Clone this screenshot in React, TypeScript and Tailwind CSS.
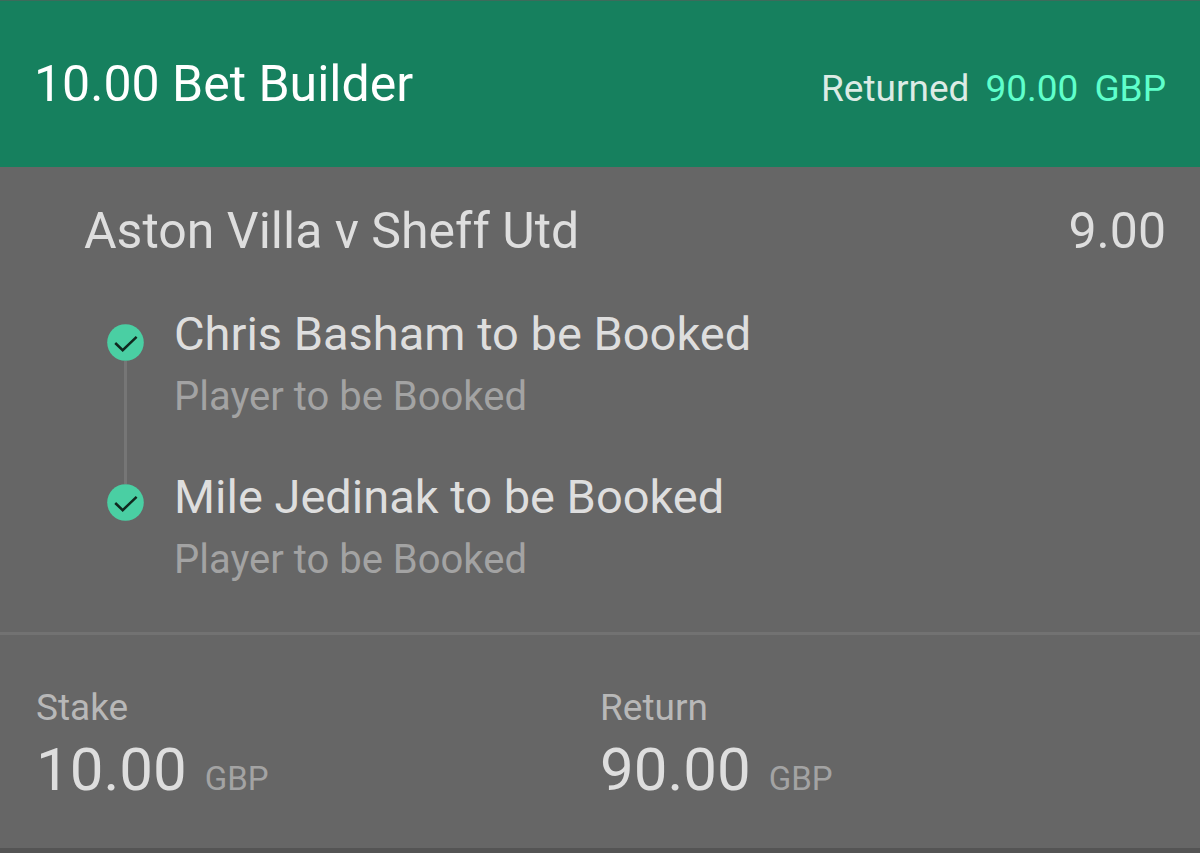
const legs = [
  { selection: 'Chris Basham to be Booked', market: 'Player to be Booked' },
  { selection: 'Mile Jedinak to be Booked', market: 'Player to be Booked' },
];

const totals = [
  { label: 'Stake', amount: '10.00' },
  { label: 'Return', amount: '90.00' },
];

function WonIcon() {
  return (
    <svg viewBox="0 0 37 37" className="block size-[37px] shrink-0">
      <circle cx="18.5" cy="18.5" r="18.3" fill="#4acfa3" />
      <path d="M8.2 19 15.7 26.2 29.6 12.8" fill="none" stroke="#10291f" strokeWidth="2.5" />
    </svg>
  );
}

function ResultRail() {
  return (
    <div className="flex flex-col items-center pt-[17px]" aria-hidden="true">
      {legs.map((leg, i) => (
        <div key={leg.selection} className="flex flex-col items-center">
          {i > 0 && <div className="h-[123px] w-[3px] bg-[#767676]" />}
          <WonIcon />
        </div>
      ))}
    </div>
  );
}

export default function App() {
  return (
    <main className="min-h-screen border-b-[5px] border-[#545454] bg-[#666] font-['Roboto',sans-serif] text-[#dedede]">
      <header className="flex items-baseline justify-between border-t border-[#3d6b5b] bg-[#16805e] px-[34px] py-14 text-white">
        <h1 className="text-[50px] leading-[54px]">10.00 Bet Builder</h1>
        <p className="flex gap-4 text-[37px] leading-[44px] text-[#dcebe5]">
          <span>Returned</span>
          <span className="flex gap-4 text-[#5fffcb]">
            <span>90.00</span>
            <span>GBP</span>
          </span>
        </p>
      </header>

      <section className="pt-9 pr-[34px] pb-[46px] pl-[84px]">
        <div className="flex items-center justify-between text-[50px] leading-[56px]">
          <h2>Aston Villa v Sheff Utd</h2>
          <span>9.00</span>
        </div>
        <div className="mt-12 flex gap-[30px] pl-[23px]">
          <ResultRail />
          <ul className="flex flex-col gap-[47px]">
            {legs.map((leg) => (
              <li key={leg.selection}>
                <h3 className="text-[47px] leading-[54px]">{leg.selection}</h3>
                <p className="mt-[10px] text-[40px] leading-[52px] text-[#a3a3a3]">{leg.market}</p>
              </li>
            ))}
          </ul>
        </div>
      </section>

      <dl className="grid grid-cols-2 border-t-[3px] border-[#727272] px-9 pt-12">
        {totals.map((total) => (
          <div key={total.label}>
            <dt className="text-[37px] leading-[50px] text-[#b8b8b8]">{total.label}</dt>
            <dd className="flex items-baseline gap-[18px] text-[60px] leading-[74px]">
              {total.amount}
              <span className="text-[33px] text-[#a3a3a3]">GBP</span>
            </dd>
          </div>
        ))}
      </dl>
    </main>
  );
}
